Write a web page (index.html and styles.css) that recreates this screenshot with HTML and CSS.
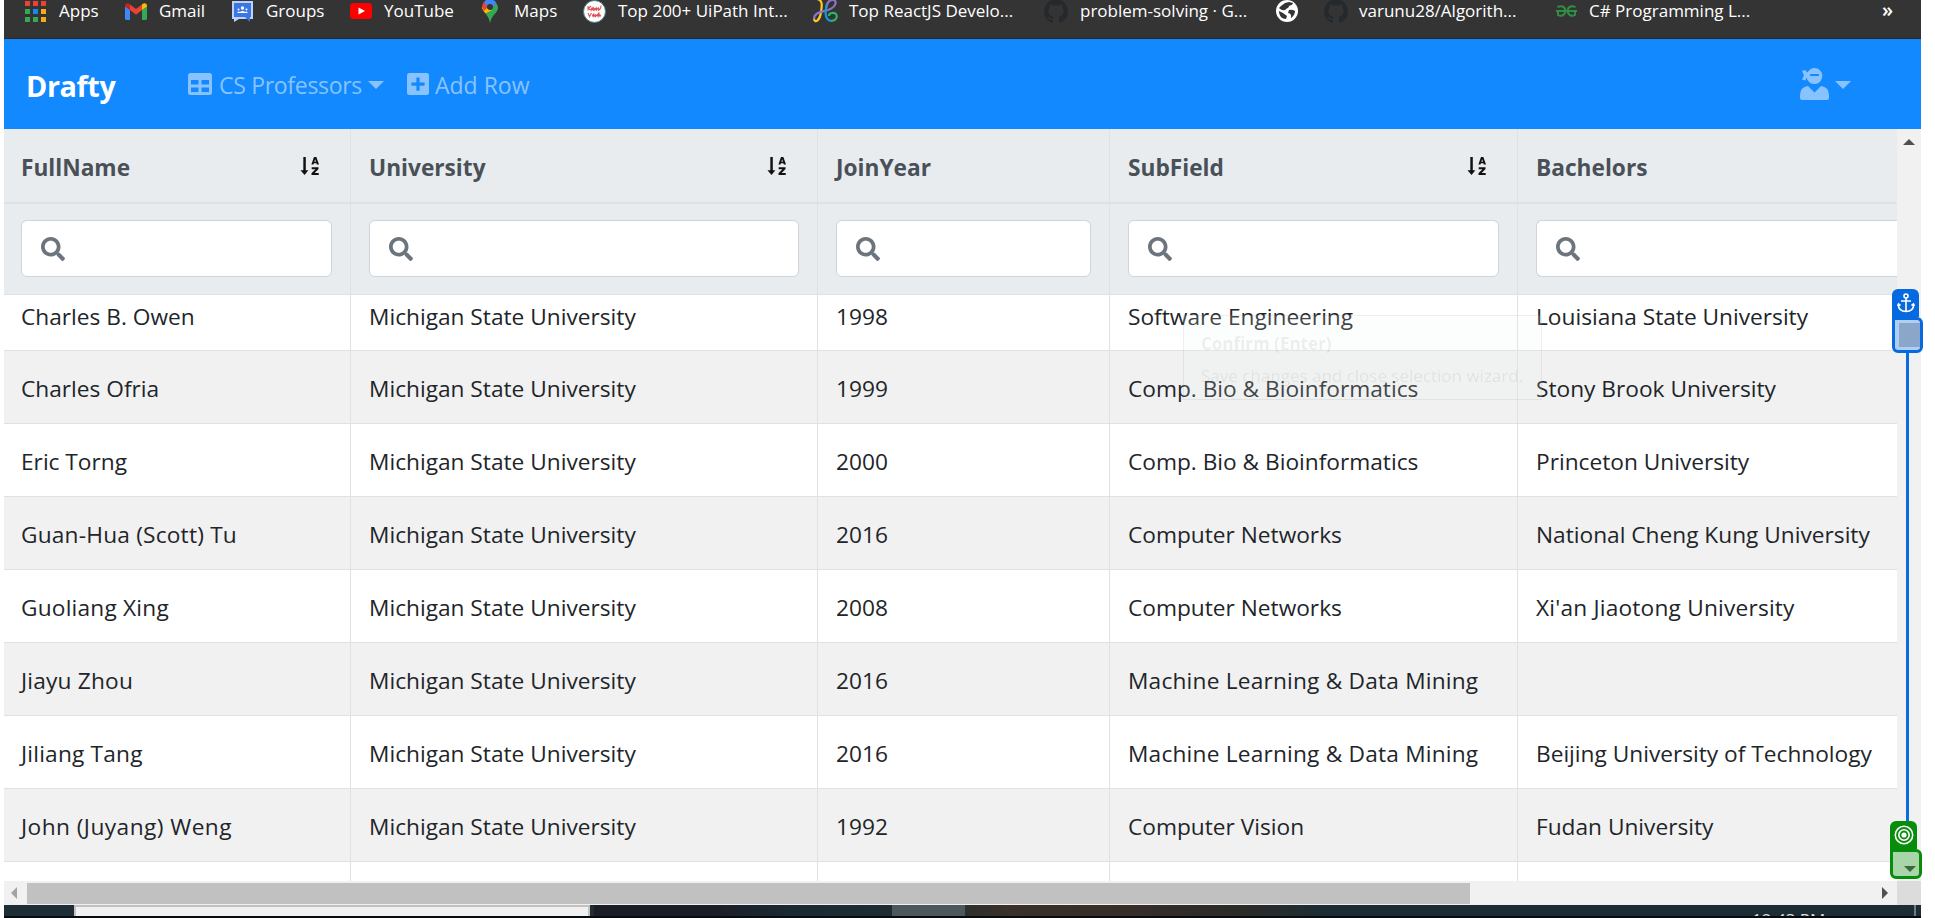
FILE: index.html
```html
<!DOCTYPE html>
<html lang="en">
<head>
<meta charset="utf-8">
<title>Drafty</title>
<link rel="stylesheet" href="styles.css">
</head>
<body>
<svg class="defs" width="0" height="0" aria-hidden="true">
<symbol id="search" viewBox="0 0 512 512"><path d="M505 442.700 405.300 343c-4.500-4.500-10.600-7-17-7H372c27.600-35.300 44-79.700 44-128C416 93.100 322.900 0 208 0S0 93.100 0 208s93.100 208 208 208c48.300 0 92.700-16.400 128-44v16.300c0 6.400 2.500 12.500 7 17l99.700 99.700c9.400 9.400 24.600 9.400 33.900 0l28.300-28.300c9.400-9.400 9.400-24.600.1-34zM208 336c-70.700 0-128-57.200-128-128 0-70.700 57.200-128 128-128 70.700 0 128 57.200 128 128 0 70.700-57.200 128-128 128z"/></symbol>
<symbol id="sort" viewBox="0 0 20 20"><path d="M3.500 0h2.600v14h2.700L4.800 19 .5 14h3zM12 8 14.700 0h2.500L20 8h-2.300l-.4-1.500h-2.700L14.200 8zm3.100-3.100h1.700l-.8-2.600zM12.300 10.800h7.200v1.900l-4.100 4.200h4.300v2.100h-7.600v-1.900l4.100-4.200h-3.900z"/></symbol>
<symbol id="github" viewBox="0 0 24 24"><path d="M12 .5a12 12 0 0 0-3.800 23.400c.6.100.8-.3.800-.6v-2.200c-3.300.7-4-1.400-4-1.400-.6-1.400-1.400-1.800-1.400-1.800-1-.7.1-.7.100-.7 1.200.1 1.900 1.200 1.900 1.200 1 1.900 2.800 1.300 3.500 1 .1-.8.400-1.300.7-1.600-2.600-.3-5.400-1.300-5.400-5.900 0-1.300.500-2.400 1.200-3.200-.1-.3-.5-1.500.1-3.200 0 0 1-.3 3.300 1.200a11 11 0 0 1 6 0c2.300-1.500 3.300-1.200 3.300-1.200.6 1.700.2 2.900.1 3.200.8.800 1.200 1.900 1.200 3.200 0 4.600-2.800 5.600-5.400 5.900.4.400.8 1.100.8 2.200v3.300c0 .3.200.7.800.6A12 12 0 0 0 12 .5z"/></symbol>
</svg>

<div class="bookmarks">
  <a class="bm bm-apps"><svg width="21" height="21" viewBox="0 0 21 21"><g fill="#ea4335"><path d="M0 0h5v5H0zM8 0h5v5H8zM16 0h5v5h-5z"/></g><path fill="#34a853" d="M0 8h5v5H0zM0 16h5v5H0zM8 16h5v5H8z"/><path fill="#1a86f0" d="M8 8h5v5H8z"/><path fill="#f5ab18" d="M16 8h5v5h-5zM16 16h5v5h-5z"/></svg><span>Apps</span></a>
  <a class="bm bm-gmail"><svg width="22" height="17" viewBox="0 0 22 17"><path fill="#4285f4" d="M0 3v12.500Q0 17 1.500 17H5V7z"/><path fill="#34a853" d="M22 3v12.500q0 1.500-1.500 1.500H17V7z"/><path fill="#ea4335" d="M5 7V1.500l6 4.500 6-4.500V7l-6 4.700z"/><path fill="#c5221f" d="M0 3c0-3 3-3.700 5-1.500V7L0 3.500z"/><path fill="#fbbc04" d="M22 3c0-3-3-3.700-5-1.500V7l5-3.500z"/></svg><span>Gmail</span></a>
  <a class="bm bm-groups"><svg width="21" height="22" viewBox="0 0 21 22"><path fill="#bdd2f7" d="M0 1h21v18H7l-5 3v-3H0z"/><path fill="#3b77e3" d="M2 3h17v14H2zM13 17h5v5z"/><g fill="#fff"><circle cx="10.500" cy="8" r="1.700"/><circle cx="6.500" cy="9.500" r="1"/><circle cx="14.500" cy="9.500" r="1"/><path d="M5 13q1.500-2.500 3-1 2.500-2 5 0 1.500-1.500 3 1z"/></g></svg><span>Groups</span></a>
  <a class="bm bm-youtube"><svg width="22" height="16" viewBox="0 0 22 16"><rect width="22" height="16" rx="3.500" fill="#f00"/><path fill="#fff" d="m8.500 4.500 6.500 3.500-6.500 3.500z"/></svg><span>YouTube</span></a>
  <a class="bm bm-maps"><svg width="16" height="24" viewBox="0 0 16 24"><path fill="#34a853" d="M8 24c-1-5-2-6-4.500-9.500L14 4q2 2 2 4.500C16 14 10 15 8 24z"/><path fill="#fbbc04" d="M3.500 14.500C1.500 12 0 10.500 0 8l6-3 4 6z"/><path fill="#ea4335" d="M0 8q0-3 2-5l5 4-5 5z"/><path fill="#4285f4" d="M2 3c4-5 10-3 12.500 1L8.500 11 5 7z"/><circle cx="8" cy="8" r="3" fill="#343434"/></svg><span>Maps</span></a>
  <a class="bm bm-uipath"><svg width="23" height="23" viewBox="0 0 23 23"><circle cx="11.500" cy="11.500" r="11" fill="#fff" stroke="#3d7882"/><path d="M5 6v4.500M8 6 5.300 8.300 7.500 10l1.500-2v2l1.500-2v2l2-2-1 2.500 2-2.500v2l2-2q1 2-.5 2.500 3-1 3-5M5 13l1.500 3.500L8.500 13M9.500 14.500v2l1.500-3v3l1.500-1.500v1.500l2-2v2l1.500-4v4l1-1.500 1 1.500" fill="none" stroke="#e05055" stroke-width="1.100"/></svg><span>Top 200+ UiPath Int...</span></a>
  <a class="bm bm-react"><svg width="25" height="24" viewBox="0 0 25 24" fill="none" stroke-width="2.200"><path stroke="#ffc928" d="M4 0c6 1 5 7 4 13-1 8-6 12-7 7"/><path stroke="#8c73c4" d="M1 20c0-7 8-7 14-9 8-3 9-8 6-10-5-1-7 3-8 8"/><path stroke="#159bd3" d="M14 6c-3 9-1 16 5 16"/><path stroke="#2bb568" d="M18 22c8-1 7-9 1-8q-3 0-3 3"/></svg><span>Top ReactJS Develo...</span></a>
  <a class="bm bm-github"><svg width="24" height="24"><use href="#github"/></svg><span>problem-solving · G...</span></a>
  <a class="bm bm-globe"><svg width="22" height="22" viewBox="0 0 22 22"><circle cx="11" cy="11" r="11" fill="#fff"/><path fill="#343434" d="M3 8q3 3 6 2c2-2 4-2 4-4 1-1 3 0 4-3l-4-1-4 1-4 3zM3 11c0 5 3 8 7 8l1-3-4-3zM13 10q3-1 6 1 0 4-4 7v-3q-1-2-3-2z"/></svg></a>
  <a class="bm bm-github2"><svg width="24" height="24"><use href="#github"/></svg><span>varunu28/Algorith...</span></a>
  <a class="bm bm-gfg"><svg width="21" height="12" viewBox="0 0 21 12" fill="none" stroke="#2f8d46" stroke-width="2"><path d="M1.500 2C6 0 9.300 2 9.300 6S5 12 2 10V6M0 6h21M19.500 2c-4.500-2-7.800 0-7.800 4s4.300 6 7.300 4V6"/></svg><span>C# Programming L...</span></a>
  <span class="overflow">»</span>
</div>

<nav class="navbar">
  <span class="brand">Drafty</span>
  <a class="nav-link professors"><svg width="24" height="22" viewBox="0 0 24 22"><path fill-rule="evenodd" d="M2.500 0h19Q24 0 24 2.500v17q0 2.500-2.500 2.500h-19Q0 22 0 19.500v-17Q0 0 2.500 0zM3 7v4.500h7.500V7zm10.500 0v4.500H21V7zM3 14.500V19h7.500v-4.500zm10.500 0V19H21v-4.500z"/></svg><span>CS Professors</span><i class="caret"></i></a>
  <a class="nav-link add-row"><svg width="22" height="22" viewBox="0 0 22 22"><path fill-rule="evenodd" d="M2.500 0h17Q22 0 22 2.500v17q0 2.500-2.500 2.500h-17Q0 22 0 19.500v-17Q0 0 2.500 0zM9.400 4.500v5h-5v3.200h5v5h3.200v-5h5V9.500h-5v-5z"/></svg><span>Add Row</span></a>
  <a class="nav-link user"><svg width="29" height="32" viewBox="0 0 29 32"><path fill-rule="evenodd" d="M7.500 4.500C9 2 11.500 0 14.500 0a8 8 0 1 1-8 9.500L5.500 12.500 2 11.500 4 7.500 2 3 5 2zM10.500 6q-1.500 1 0 2h8q1.500-1 0-2zM8 18l6.500 6.500L21 18q8 1 8 9v3q0 2-2 2H2q-2 0-2-2v-3q0-8 8-9z"/></svg><i class="caret"></i></a>
</nav>

<main class="viewport">
  <div class="sheet">
    <div class="row head">
      <div class="cell">FullName<svg class="sort"><use href="#sort"/></svg></div>
      <div class="cell">University<svg class="sort"><use href="#sort"/></svg></div>
      <div class="cell">JoinYear</div>
      <div class="cell">SubField<svg class="sort"><use href="#sort"/></svg></div>
      <div class="cell">Bachelors</div>
    </div>
    <div class="row filters">
      <div class="cell"><div class="search"><svg><use href="#search"/></svg></div></div>
      <div class="cell"><div class="search"><svg><use href="#search"/></svg></div></div>
      <div class="cell"><div class="search"><svg><use href="#search"/></svg></div></div>
      <div class="cell"><div class="search"><svg><use href="#search"/></svg></div></div>
      <div class="cell"><div class="search open"><svg><use href="#search"/></svg></div></div>
    </div>
    <div class="rows">
      <div class="row first"><div class="cell">Charles B. Owen</div><div class="cell">Michigan State University</div><div class="cell">1998</div><div class="cell">Software Engineering</div><div class="cell">Louisiana State University</div></div>
      <div class="row alt"><div class="cell">Charles Ofria</div><div class="cell">Michigan State University</div><div class="cell">1999</div><div class="cell">Comp. Bio &amp; Bioinformatics</div><div class="cell">Stony Brook University</div></div>
      <div class="row"><div class="cell">Eric Torng</div><div class="cell">Michigan State University</div><div class="cell">2000</div><div class="cell">Comp. Bio &amp; Bioinformatics</div><div class="cell">Princeton University</div></div>
      <div class="row alt"><div class="cell wide">Guan-Hua (Scott) Tu</div><div class="cell">Michigan State University</div><div class="cell">2016</div><div class="cell">Computer Networks</div><div class="cell">National Cheng Kung University</div></div>
      <div class="row"><div class="cell wide">Guoliang Xing</div><div class="cell">Michigan State University</div><div class="cell">2008</div><div class="cell">Computer Networks</div><div class="cell wide">Xi'an Jiaotong University</div></div>
      <div class="row alt"><div class="cell wide">Jiayu Zhou</div><div class="cell">Michigan State University</div><div class="cell">2016</div><div class="cell wide">Machine Learning &amp; Data Mining</div><div class="cell"></div></div>
      <div class="row"><div class="cell wide">Jiliang Tang</div><div class="cell">Michigan State University</div><div class="cell">2016</div><div class="cell wide">Machine Learning &amp; Data Mining</div><div class="cell">Beijing University of Technology</div></div>
      <div class="row alt"><div class="cell wider">John (Juyang) Weng</div><div class="cell">Michigan State University</div><div class="cell">1992</div><div class="cell">Computer Vision</div><div class="cell">Fudan University</div></div>
      <div class="row last"><div class="cell"></div><div class="cell"></div><div class="cell"></div><div class="cell"></div><div class="cell"></div></div>
    </div>
  </div>
  <div class="vscroll"><i class="arrow-up"></i></div>
  <div class="hscroll"><i class="arrow-left"></i><div class="thumb"></div><i class="arrow-right"></i></div>
  <div class="corner"></div>
  <div class="tooltip"><b>Confirm (Enter)</b><span>Save changes and close selection wizard.</span></div>
  <div class="track"></div>
  <div class="marker anchor"><div class="tab"><svg width="18" height="20" viewBox="0 0 18 20" fill="none" stroke="#fff" stroke-width="1.600"><circle cx="9" cy="3" r="2"/><path d="M9 5v13M4 8h10M1.300 11c0 5 3 7.500 7.700 7.500s7.700-2.500 7.700-7.500M.5 13l1-2 2 1.500M17.500 13l-1-2-2 1.500"/></svg></div><div class="box"><i class="fill"></i></div></div>
  <div class="marker target"><div class="tab"><svg width="20" height="20" viewBox="0 0 20 20" fill="none" stroke="#fff" stroke-width="1.600"><circle cx="10" cy="10" r="8.700"/><circle cx="10" cy="10" r="5.200"/><circle cx="10" cy="10" r="1.800" fill="#fff"/></svg></div><div class="box"><i class="arrow-down"></i></div></div>
</main>

<footer class="taskbar">
  <div class="taskbar-search"></div>
  <div class="task-active"></div>
  <div class="clock">12:43 PM</div>
  <div class="show-desktop"></div>
</footer>
</body>
</html>
```

FILE: styles.css
```css
* { box-sizing: border-box; }
body { margin: 0; width: 1935px; height: 918px; padding-left: 4px; overflow: hidden; background: #fff; font-family: "Open Sans", "Noto Sans", sans-serif; color: #212529; }
.defs { position: absolute; }
svg { display: block; flex: none; }

.bookmarks { width: 1917px; height: 39px; background: #343434; border-bottom: 1px solid #282828; display: flex; overflow: hidden; color: #fff; font-size: 17px; white-space: nowrap; }
.bm { display: flex; align-items: center; height: 22px; flex: none; }
.bm span { margin-top: -2px; }
.bm-apps { width: 100px; margin-left: 21px; gap: 13px; }
.bm-gmail { width: 107px; gap: 12px; }
.bm-groups { width: 118px; gap: 13px; }
.bm-youtube { width: 132px; gap: 12px; }
.bm-maps { width: 101px; gap: 16px; }
.bm-uipath { width: 230px; gap: 12px; }
.bm-react { width: 231px; gap: 11px; }
.bm-github { width: 232px; gap: 12px; }
.bm-globe { width: 48px; }
.bm-github2 { width: 232px; gap: 11px; }
.bm-gfg { width: 326px; gap: 12px; }
.bm-github svg, .bm-github2 svg { fill: #24292e; }
.overflow { font-size: 20px; font-weight: 600; line-height: 20px; }

.navbar { width: 1917px; height: 90px; background: #1289ff; display: flex; align-items: center; padding-left: 22px; color: #fff; }
.brand { width: 162px; font-size: 28.800px; font-weight: 700; letter-spacing: -.4px; padding-top: 2px; }
.nav-link { display: flex; align-items: center; font-size: 23px; color: #88c3ff; white-space: nowrap; }
.nav-link svg { fill: #88c3ff; }
.nav-link span { padding-top: 2px; }
.professors { width: 219px; gap: 7px; }
.professors span { letter-spacing: -.3px; }
.professors .caret { margin-left: -1px; }
.add-row { gap: 6px; }
.user { margin-left: auto; margin-right: 70px; gap: 6px; }
.caret { margin-top: 2px; border: 8px solid transparent; border-top-color: #88c3ff; border-bottom: 0; }

.viewport { position: relative; width: 1917px; height: 776px; display: grid; grid-template: 752px 24px / 1893px 24px; }
.sheet { overflow: hidden; }
.row { display: grid; grid-template-columns: 347px 467px 292px 408px 379px; height: 73px; border-bottom: 1px solid #dee2e6; background: #fff; }
.cell { display: flex; align-items: center; padding: 2px 18px 0 18px; border-right: 1px solid #dee2e6; white-space: nowrap; font-size: 22.700px; min-width: 0; }
.cell:first-child { padding-left: 17px; }
.cell:last-child { border-right: 0; }
.wide { letter-spacing: .2px; }
.wider { letter-spacing: .45px; }
.alt { background: #f1f1f1; }
.head { height: 75px; background: #e8ecef; border-bottom-width: 2px; }
.head .cell { font-weight: 700; color: #495057; padding-top: 4px; }
.sort { width: 19px; height: 19px; margin: 0 13px 3px auto; fill: #111; }
.filters { height: 91px; background: #e8ecef; }
.filters .cell { padding-top: 0; padding-bottom: 1px; }
.search { width: 100%; height: 57px; border: 1px solid #ced4da; border-radius: 6px; background: #fff; padding: 16px 19px; }
.search svg { width: 24px; height: 24px; fill: #6c757d; }
.open { margin-right: -18px; border-right: 0; border-radius: 6px 0 0 6px; width: 361px; flex: none; }
.first { height: 56px; }
.first .cell { padding-bottom: 15px; }
.last { height: 20px; border-bottom: 0; }

.vscroll { background: #f1f1f1; display: flex; justify-content: center; padding-top: 10px; }
.arrow-up { height: 0; border: 6px solid transparent; border-bottom-color: #505050; border-top: 0; }
.hscroll { background: #f1f1f1; display: flex; align-items: center; padding: 0 9px 0 7px; }
.arrow-left { border: 6px solid transparent; border-right-color: #a3a3a3; border-left: 0; }
.thumb { width: 1443px; height: 21px; margin-left: 10px; background: #c1c1c1; }
.arrow-right { margin-left: auto; border: 6px solid transparent; border-left-color: #505050; border-right: 0; }
.corner { background: #dcdcdc; }

.tooltip { position: absolute; left: 1179px; top: 186px; width: 359px; height: 85px; border: 1px solid rgba(0,0,0,.06); background: rgba(235,245,240,.16); padding: 15px 17px 10px; display: flex; flex-direction: column; justify-content: space-between; font-size: 17px; line-height: 26px; color: rgba(0,0,0,.08); white-space: nowrap; }
.track { position: absolute; left: 1902px; top: 220px; width: 3px; height: 475px; background: #0b6be0; }
.marker { position: absolute; width: 31px; }
.tab { width: 27px; height: 28px; border-radius: 6px 6px 0 0; display: grid; place-items: center; }
.box { height: 36px; border: 3px solid; border-radius: 0 6px 6px 6px; }
.anchor { left: 1888px; top: 160px; }
.anchor .tab { background: #0769df; }
.anchor .box { border-color: #0769df; background: #b0cdf2; padding: 3px 0 3px 4px; }
.fill { display: block; height: 100%; background: #8ba6cb; }
.target { left: 1886px; top: 692px; width: 32px; }
.target .tab { background: #078c0b; }
.target .box { height: 30px; border-color: #078c0b; background: #a9d5ab; display: flex; padding: 14px 0 0 11px; }
.arrow-down { height: 0; border: 6px solid transparent; border-top-color: #3d683e; border-bottom: 0; }

.taskbar { width: 1917px; height: 13px; overflow: hidden; display: flex; background: linear-gradient(90deg, #1d2e37 0 590px, #1b1e27 590px 710px, #1a2b34 800px, #1d2d32 890px, #3a3029 1010px, #362d29 1120px, #2b2b28 1240px, #1c2d35 1320px); border-bottom: 2px solid #080c0e; }
.taskbar-search { width: 516px; height: 13px; margin-left: 70px; border: 2px solid #c1c1c1; border-bottom: 0; background: #f1f1f1; }
.task-active { width: 73px; margin-left: 302px; background: #4c585b; }
.clock { margin-left: 787px; width: 162px; font-size: 17px; line-height: 20px; padding-top: 5px; color: #ddd; }
.show-desktop { width: 2px; background: #6f7c82; }
```
